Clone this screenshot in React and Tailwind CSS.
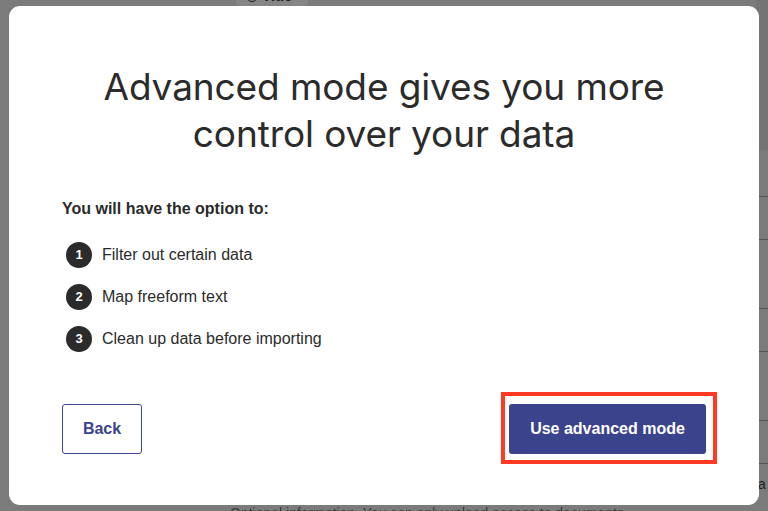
import React from "react";

const items = ["Filter out certain data", "Map freeform text", "Clean up data before importing"];

export default function App() {
  return (
    <div className="relative h-[511px] w-[768px] overflow-hidden bg-[#7b7b7b] font-['Liberation_Sans',Arial,sans-serif]">
      {/* dimmed page underneath */}
      <div className="absolute left-[236px] top-[-14px] flex h-[20px] w-[72px] items-center gap-[4px] rounded-[4px] bg-[#858585] px-[10px] text-[15px] font-bold text-[#1e1e1e]">
        <span className="flex h-[12px] w-[12px] items-center justify-center rounded-full border border-[#1e1e1e] text-[8px]">N</span>
        Title
      </div>
      <div className="absolute right-0 top-0 flex h-full w-[12px] flex-col">
        <div className="h-[150px] bg-[#747474]" />
        <div className="mt-[46px] h-px bg-[#555]" />
        <div className="mt-[42px] h-px bg-[#555]" />
        <div className="mt-[68px] h-px bg-[#555]" />
        <div className="mt-[42px] h-px bg-[#555]" />
        <div className="mt-[68px] h-px bg-[#555]" />
        <div className="mt-[42px] h-px bg-[#555]" />
        <div className="mt-[10px] pl-[2px] text-[14px] text-[#222]">a</div>
      </div>
      <div className="absolute left-[230px] top-[503px] text-[14px] text-[#3a3a3a] blur-[0.6px]">Optional information. You can only upload access to documents</div>

      {/* modal */}
      <div className="absolute left-[9px] top-[6px] flex h-[499px] w-[750px] flex-col rounded-[11px] bg-white">
        <h1 className="mt-[57px] text-center font-['Inter',sans-serif] text-[37px] font-normal leading-[47px] tracking-[-0.1px] text-[#2b2b2b]">
          Advanced mode gives you more
          <br />
          control over your data
        </h1>
        <div className="mt-[42px] pl-[53px] text-[#2b2b2b]">
          <p className="text-[16px] font-bold leading-[20px]">You will have the option to:</p>
          <ul className="mt-[23px] flex flex-col gap-[16px]">
            {items.map((t, i) => (
              <li key={t} className="flex h-[26px] items-center gap-[10px]">
                <span className="ml-[4px] flex h-[26px] w-[26px] items-center justify-center rounded-full bg-[#2b2b2b] text-[13px] font-bold text-white">
                  {i + 1}
                </span>
                <span className="text-[16px] leading-[20px]">{t}</span>
              </li>
            ))}
          </ul>
        </div>
        <div className="mt-[40px] flex items-start justify-between pl-[53px] pr-[42px]">
          <button className="mt-[12px] h-[50px] w-[80px] rounded-[3px] border border-[#3b438d] bg-white text-[16px] font-bold text-[#3b438d]">
            Back
          </button>
          <div className="border-[4px] border-[#ff3a22] pb-[6px] pl-[4px] pr-[7px] pt-[8px]">
            <button className="h-[50px] w-[197px] rounded-[3px] bg-[#3b438d] text-[16px] font-bold text-white">
              Use advanced mode
            </button>
          </div>
        </div>
      </div>
    </div>
  );
}
